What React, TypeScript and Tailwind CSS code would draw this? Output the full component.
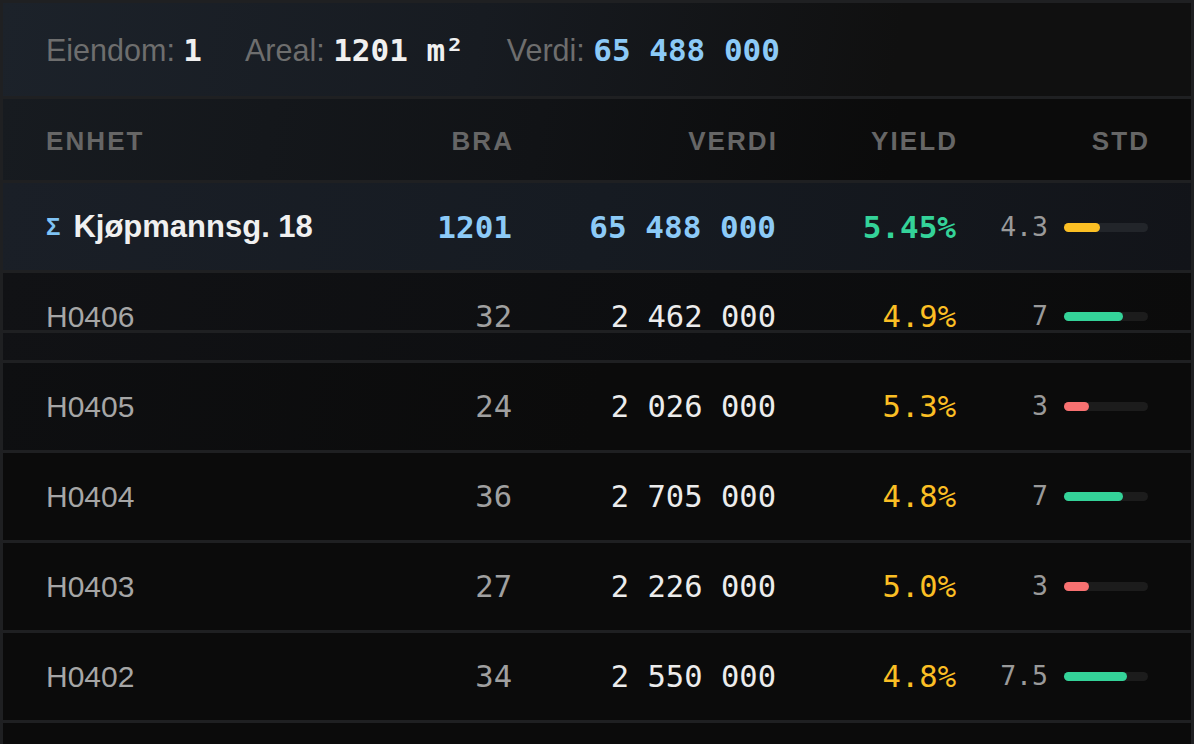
import React from "react";

const mono = "font-['DejaVu_Sans_Mono',monospace]";
const sans = "font-['Liberation_Sans',Arial,sans-serif]";

type Row = { id: string; bra: number; verdi: string; yld: string; std: string; pct: number; color: string };

const rows: Row[] = [
  { id: "H0406", bra: 32, verdi: "2 462 000", yld: "4.9%", std: "7", pct: 0.7, color: "bg-[#34d399]" },
  { id: "H0405", bra: 24, verdi: "2 026 000", yld: "5.3%", std: "3", pct: 0.3, color: "bg-[#f87171]" },
  { id: "H0404", bra: 36, verdi: "2 705 000", yld: "4.8%", std: "7", pct: 0.7, color: "bg-[#34d399]" },
  { id: "H0403", bra: 27, verdi: "2 226 000", yld: "5.0%", std: "3", pct: 0.3, color: "bg-[#f87171]" },
  { id: "H0402", bra: 34, verdi: "2 550 000", yld: "4.8%", std: "7.5", pct: 0.75, color: "bg-[#34d399]" },
];

const grid = "grid grid-cols-[1fr_120px_264px_180px_192px] items-center pl-[43px] pr-[43px]";

function Std({ v, pct, color, track }: { v: string; pct: number; color: string; track: string }) {
  return (
    <div className="flex items-center justify-end gap-[16px]">
      <span className={`${mono} text-[26.5px] text-[#9a9a9a] leading-none`}>{v}</span>
      <div className={`h-[9px] w-[84px] rounded-full ${track}`}>
        <div className={`h-full rounded-full ${color}`} style={{ width: `${pct * 84}px` }} />
      </div>
    </div>
  );
}

export default function App() {
  return (
    <div className="w-[1194px] h-[744px] overflow-hidden bg-[#1f2022] pt-[3px] pl-[3px] pr-[3px] flex flex-col gap-[3px]">
      {/* summary */}
      <div className="h-[93px] shrink-0 flex items-center gap-[43px] pl-[43px] pt-[2px] bg-[linear-gradient(100deg,#1c222a_0%,#171b21_40%,#101010_75%)]">
        <div className="flex items-baseline">
          <span className={`${sans} text-[30.5px] text-[#6e6e6e]`}>Eiendom:&nbsp;</span>
          <span className={`${mono} text-[31px] font-bold text-[#f0f0f0]`}>1</span>
        </div>
        <div className="flex items-baseline">
          <span className={`${sans} text-[30.5px] text-[#6e6e6e]`}>Areal:&nbsp;</span>
          <span className={`${mono} text-[31px] font-bold text-[#f0f0f0]`}>1201 m²</span>
        </div>
        <div className="flex items-baseline">
          <span className={`${sans} text-[30.5px] text-[#6e6e6e]`}>Verdi:&nbsp;</span>
          <span className={`${mono} text-[31px] font-bold text-[#8ccaf7]`}>65 488 000</span>
        </div>
      </div>

      {/* header */}
      <div className={`${grid} h-[81px] shrink-0 pt-[3px] bg-[linear-gradient(100deg,#171b20_0%,#111316_45%,#0b0b0b_75%)] ${sans} text-[26px] font-bold tracking-[0.08em] text-[#666666]`}>
        <div>ENHET</div>
        <div className="text-right mr-[-2px]">BRA</div>
        <div className="text-right mr-[-2px]">VERDI</div>
        <div className="text-right mr-[-2px]">YIELD</div>
        <div className="text-right mr-[-2px]">STD</div>
      </div>

      {/* sigma row */}
      <div className={`${grid} h-[87px] shrink-0 pt-[1px] bg-[linear-gradient(100deg,#1a1f27_0%,#161b22_50%,#121419_100%)]`}>
        <div className="flex items-center">
          <span className={`${sans} text-[24px] font-bold text-[#7fc3f5] mr-[13px]`}>Σ</span>
          <span className={`${sans} text-[31px] font-bold text-[#f0f0f0]`}>Kjøpmannsg. 18</span>
        </div>
        <div className={`${mono} text-[31px] font-bold text-[#8ccaf7] text-right`}>1201</div>
        <div className={`${mono} text-[31px] font-bold text-[#8ccaf7] text-right`}>65 488 000</div>
        <div className={`${mono} text-[31px] font-bold text-[#34d399] text-right`}>5.45%</div>
        <Std v="4.3" pct={0.43} color="bg-[#fbbf24]" track="bg-[#22252a]" />
      </div>

      {rows.map((r, i) => (
        <div
          key={r.id}
          className={`${grid} relative h-[87px] shrink-0 ${i === 0 ? "bg-[linear-gradient(100deg,#111215_0%,#0d0e10_60%,#0b0b0b_100%)]" : i === 1 ? "bg-[linear-gradient(100deg,#0e0f11_0%,#0b0b0b_50%)]" : "bg-[#0b0b0b]"}`}
        >
          <div className={`${sans} text-[30px] text-[#a6a6a6]`}>{r.id}</div>
          <div className={`${mono} text-[30.5px] text-[#a0a0a0] text-right`}>{r.bra}</div>
          <div className={`${mono} text-[30.5px] text-[#ececec] text-right`}>{r.verdi}</div>
          <div className={`${mono} text-[30.5px] text-[#fbbf24] text-right`}>{r.yld}</div>
          <Std v={r.std} pct={r.pct} color={r.color} track="bg-[#1c1c1c]" />
          {i === 0 && <div className="absolute left-0 right-0 top-[57px] h-[3px] bg-[#1f2022]" />}
        </div>
      ))}
      <div className="h-[87px] shrink-0 bg-[#0b0b0b]" />
    </div>
  );
}
